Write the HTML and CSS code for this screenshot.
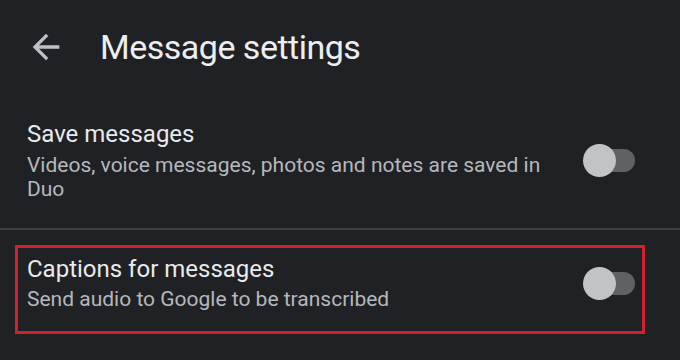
FILE: index.html
```html
<!DOCTYPE html>
<html lang="en">
<head>
    <meta charset="UTF-8">
    <meta name="viewport" content="width=device-width, initial-scale=1.0">
    <title>Message settings</title>
    <link rel="stylesheet" href="styles.css">
</head>
<body>
    <div class="header">
        <svg class="back-icon" viewBox="0 0 24 24" width="40" height="40">
            <path d="M20 11H7.83l5.59-5.59L12 4l-8 8 8 8 1.41-1.41L7.83 13H20v-2z" fill="#bdc1c6"/>
        </svg>
        <h1 class="title">Message settings</h1>
    </div>

    <div class="setting-row">
        <div class="setting-text">
            <div class="setting-title">Save messages</div>
            <div class="setting-desc">Videos, voice messages, photos and notes are saved in Duo</div>
        </div>
        <div class="switch">
            <span class="switch-track"></span>
            <span class="switch-thumb"></span>
        </div>
    </div>

    <div class="divider"></div>

    <div class="highlight">
        <div class="setting-row boxed">
            <div class="setting-text">
                <div class="setting-title">Captions for messages</div>
                <div class="setting-desc">Send audio to Google to be transcribed</div>
            </div>
            <div class="switch">
                <span class="switch-track"></span>
                <span class="switch-thumb"></span>
            </div>
        </div>
    </div>
</body>
</html>
```

FILE: styles.css
```css
body {
    margin: 0;
    width: 680px;
    height: 360px;
    overflow: hidden;
    background-color: #202124;
    font-family: Roboto, "Liberation Sans", sans-serif;
    color: #e8eaed;
}
.header {
    display: flex;
    align-items: center;
    height: 94px;
}
.back-icon {
    display: block;
    margin-left: 26px;
}
.title {
    margin: 0 0 0 34px;
    font-size: 34px;
    font-weight: 400;
    letter-spacing: -0.5px;
    line-height: 40px;
    color: #eceef0;
}
.setting-row {
    display: flex;
    align-items: center;
    justify-content: space-between;
    padding: 26px 45px 27px 27px;
}
.setting-text {
    max-width: 545px;
}
.setting-title {
    font-size: 24px;
    line-height: 28px;
    color: #e8eaed;
}
.setting-desc {
    margin-top: 5px;
    font-size: 21px;
    line-height: 24px;
    color: #b5b8bc;
}
.switch {
    position: relative;
    width: 52px;
    height: 33px;
    flex-shrink: 0;
}
.switch-track {
    position: absolute;
    right: 0;
    top: 5px;
    width: 45px;
    height: 23px;
    border-radius: 12px;
    background-color: #5f6164;
}
.switch-thumb {
    position: absolute;
    left: 0;
    top: 0;
    width: 33px;
    height: 33px;
    border-radius: 50%;
    background-color: #c2c3c5;
}
.divider {
    height: 2px;
    background-color: #3c3d40;
}
.highlight {
    width: 624px;
    margin: 15px 0 0 15px;
    border: 3px solid #d2202f;
}
.boxed {
    padding: 7px 7px 20px 9px;
}
.boxed .setting-desc {
    margin-top: 4px;
}
```
